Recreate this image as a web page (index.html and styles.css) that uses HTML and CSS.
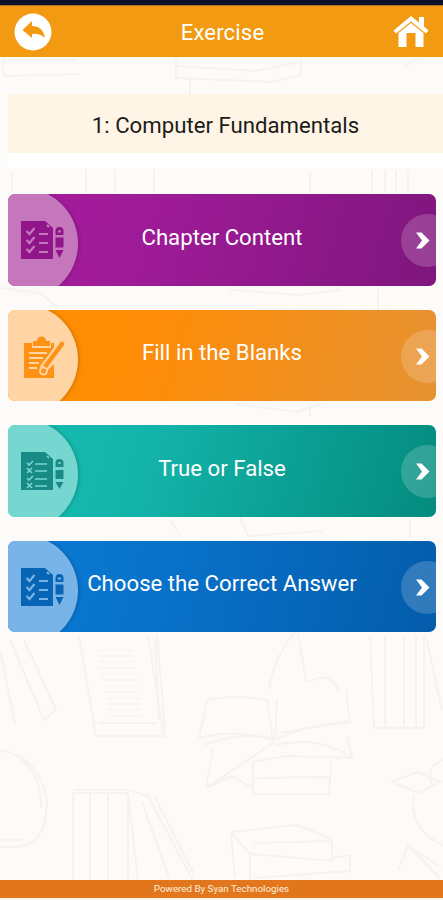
FILE: index.html
```
<!DOCTYPE html>
<html lang="en">
<head>
<meta charset="utf-8">
<title>Exercise</title>
<link rel="stylesheet" href="styles.css">
</head>
<body>
<svg width="0" height="0" class="defs">
  <symbol id="list" viewBox="0 0 44 40">
    <path fill="currentColor" d="M0 1H24L32 8V39H0ZM34.500 15V11a4 4 0 0 1 8 0V15ZM34.500 17.500h8v10h-8ZM34.500 30h8l-4 8Z"/>
    <path class="cut" d="M26 5l2 2M37 11.500h3M5.500 11l3 3 5-6M5.500 20l3 3 5-6M5.500 29l3 3 5-6M18 14h9M18 23h9M18 32h9"/>
  </symbol>
  <symbol id="quiz" viewBox="0 0 44 40">
    <path fill="currentColor" d="M0 1H24L32 8V39H0ZM34.500 16V12a4 4 0 0 1 8 0V16ZM34.500 19h8v9h-8ZM34.500 31h8l-4 7Z"/>
    <path class="cut thin" d="M26 5l2 2M37 12h3M6 12l2 2 4-4M6 17l5 5M11 17l-5 5M6 27l2 2 4-4M6 32l5 5M11 32l-5 5M14 13h12M14 20h12M14 28h12M14 35h12"/>
  </symbol>
  <symbol id="next" viewBox="0 0 14 17">
    <path fill="currentColor" d="M0 .5H5.500L13.500 8.500 5.500 16.500H0L6 8.500Z"/>
  </symbol>
</svg>
<svg class="sketch" viewBox="0 0 443 900" aria-hidden="true">
  <path d="M5 58q-5 9 0 18l74-2M8 60h68M176 58v20l95 4 30-7V60M176 66l80 5 43-9M190 80v14M405 68l10-10 8 2"/>
  <path d="M12 172v20M86 170v23M115 170v23M154 170v23M310 172v20M372 170v23M385 170v23M396 170v23M408 170v23"/>
  <path d="M0 288l40 5 18 15M230 290l70 5 40-5M236 404l60 8 25-8M310 404v12M240 516l8 20 75-5M170 520l12 18M378 290v20M410 520v18"/>
  <path d="M0 650l15 75M10 640l34 80 12-10L24 640M79 636l17 100h68L148 636M157 636l8 95M98 723h58M155 640l4 80"/>
  <path class="faint" d="M97 650h36M98 656h36M99 662h36M100 668h37M101 674h36M102 680h36M104 686h34M105 692h34M106 698h34M107 704h33M109 710h31M110 716h30"/>
  <path d="M199 738l8-38q30-6 60 0l6 40q-38-12-74-2M204 745q40-14 71-6l2-40M275 740q30-16 75-17l-4-34M269 690q4-32 28-61l9 52M309 682q20-12 30 9M213 748l-7 40 68-46M206 788l26-12 22 13M275 745q45-10 77 13l-66-2-33 6v32h76l2-32M254 778l75-1M352 758l-5-22M280 733l68-12"/>
  <path d="M370 636l4 92h50V636M385 636v90M404 636v90M416 636v90M427 640l15 70"/>
  <path d="M0 750q42 8 47 53-2 44-30 44H0M0 840h22M22 760q20 18 19 48"/>
  <path d="M73 880V793h55v87M74 790h54l20 6 45 84M90 794v86M108 794v86M128 794l10 86M142 802l28 78M155 798l40 78"/>
  <path d="M231 832l66-7 35 14v22l-82-7-19-22M231 832l4 45M250 854v26M332 858l18-3v16l-96 7M254 843l76-2"/>
  <path d="M391 782l26-10 24 10-22 11-28-11M443 760q-20 8-10 26M414 795q-5 35 29 50M398 870l10-24 34 22M410 848l30 30"/>
</svg>
<div class="screen">
  <div class="status"></div>
  <header>
    <svg class="back" viewBox="0 0 38 38"><circle cx="19" cy="19" r="18.500" fill="#fff"/><path d="M8.500 17 18 8v5q11 0 13 12-6-5-13-4v4Z" fill="#f29a11"/></svg>
    <h1>Exercise</h1>
    <svg class="home" viewBox="0 0 36 34" fill="#fff"><path d="M18 1 .5 15.500 3 18.500 18 6.500 33 18.500l2.500-3L31 11.500V2h-5v5.500Z"/><path d="M18 8 5.500 18V32h8V18h9v14h8V18Z"/></svg>
  </header>
  <main>
    <h2>1: Computer Fundamentals</h2>
    <nav>
      <a class="card purple"><span class="bubble"><svg class="icon"><use href="#list"/></svg></span><span class="label">Chapter Content</span><span class="go"><svg><use href="#next"/></svg></span></a>
      <a class="card orange"><span class="bubble"><svg class="icon" viewBox="0 0 44 42"><path fill="currentColor" d="M2 7h8v5h19V7h3v11L22 33l1 6h8v3H2ZM11 10V5h4a4.500 4.500 0 0 1 9 0h4v5ZM32 28v14H20V40z"/><path class="cut" d="M7 17h18M7 22h14M7 27h10M7 32h8"/><path d="M39 9 21 33" stroke="#ffd5a5" stroke-width="8"/><path d="M40 8 23 31" stroke="currentColor" stroke-width="4.500" stroke-linecap="round"/><circle cx="21.500" cy="35" r="3.500" fill="currentColor" stroke="#ffd5a5" stroke-width="2"/></svg></span><span class="label">Fill in the Blanks</span><span class="go"><svg><use href="#next"/></svg></span></a>
      <a class="card teal"><span class="bubble"><svg class="icon"><use href="#quiz"/></svg></span><span class="label">True or False</span><span class="go"><svg><use href="#next"/></svg></span></a>
      <a class="card blue"><span class="bubble"><svg class="icon"><use href="#list"/></svg></span><span class="label">Choose the Correct Answer</span><span class="go"><svg><use href="#next"/></svg></span></a>
    </nav>
  </main>
  <footer>Powered By Syan Technologies</footer>
</div>
</body>
</html>
```
FILE: styles.css
```
* { box-sizing: border-box; }
body { margin: 0; background: #fdfbf9; font-family: Roboto, sans-serif; }
.defs { position: absolute; }
.sketch { position: absolute; inset: 0; width: 443px; height: 900px; fill: none; stroke: #f5f2f0; stroke-width: 2; }
.sketch .faint { stroke: #f8f5f3; }
.screen { position: relative; height: 900px; display: flex; flex-direction: column; border-bottom: 2px solid #fff6ec; }
.status { height: 5px; background: #0d1127; }
header { height: 52px; background: #f29a11; color: #fff; display: flex; align-items: center; justify-content: space-between; padding: 0 14px; border-top: 1px solid #a87532; }
h1, h2 { margin: 0; font-weight: 400; }
h1 { font-size: 22px; letter-spacing: .2px; padding-top: 2px; }
.back { width: 38px; height: 38px; }
.home { width: 36px; height: 34px; }
main { flex: 1; padding: 37px 7px 0 8px; }
h2 { height: 74px; margin-right: -7px; background: #fff5e6; border-bottom: 15px solid #fff; display: flex; align-items: center; justify-content: center; font-size: 22.200px; color: #1d1b18; padding: 2px 0 0; }
nav { display: grid; gap: 24px; margin-top: 26px; }
.card { position: relative; height: 91.500px; border-radius: 7px; overflow: hidden; display: flex; align-items: center; justify-content: center; color: #fff; box-shadow: 0 0 2px #fff; }
.label { font-size: 22.200px; padding-bottom: 6px; white-space: nowrap; }
.bubble { position: absolute; left: -41px; top: -6px; width: 111px; height: 111px; border-radius: 50%; background: var(--soft); box-shadow: 1px 0 4px #0003; }
.icon { position: absolute; left: 54px; top: 31px; width: 44px; height: 42px; color: var(--ink); }
.cut { fill: none; stroke: var(--soft); stroke-width: 2.2; }
.thin { stroke-width: 1.6; }
.go { position: absolute; left: 393px; top: 20px; width: 53px; height: 53px; border-radius: 50%; background: #ffffff2e; }
.go svg { position: absolute; left: 15px; top: 18px; width: 14px; height: 17px; }
.purple { background: linear-gradient(105deg, #a51b9d, #a01b99 30%, #7f167d); --soft: #c577bd; --ink: #8f1589; }
.orange { background: linear-gradient(105deg, #ff9000, #ff8c05 30%, #e69232); --soft: #ffd5a5; --ink: #ff9114; }
.orange .icon { left: 55px; top: 32px; }
.teal { background: linear-gradient(105deg, #18bdb2, #13b2a8 35%, #038b7e); --soft: #75d7d0; --ink: #198b87; }
.blue { background: linear-gradient(105deg, #0b7bd5, #0872ca 35%, #045cab); --soft: #79b4e8; --ink: #0864b4; }
footer { height: 18px; background: #e2761c; color: #fff0df; font-size: 9.800px; line-height: 18px; text-align: center; }
```
